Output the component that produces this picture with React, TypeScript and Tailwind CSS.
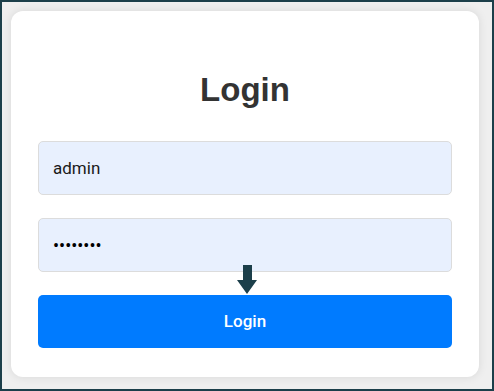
import React from 'react';

const App = () => {
  return (
    <div className="h-[391px] w-[494px] border-2 border-[#1c3f4a] bg-[#efefef] pl-[9px] pt-[9px]">
      <div className="relative flex h-[366px] w-[468px] flex-col rounded-[12px] bg-white px-[27px] pb-[29px] pt-[59px] shadow-[0_0_10px_rgba(0,0,0,0.1)]">
        <h2 className="text-center font-['Liberation_Sans',Arial,sans-serif] text-[33px] font-bold leading-[40px] text-[#333333]">
          Login
        </h2>
        <input
          type="text"
          defaultValue="admin"
          className="mt-[31px] h-[54px] w-full rounded-[5px] border border-[#dcdcdc] bg-[#e8f0fe] pl-[14px] font-['Roboto',sans-serif] text-[17px] text-[#1a1a1a] outline-none"
        />
        <input
          type="password"
          defaultValue="password"
          className="mt-[23px] h-[54px] w-full rounded-[5px] border border-[#dcdcdc] bg-[#e8f0fe] pl-[14px] font-['Roboto',sans-serif] text-[18px] text-black outline-none"
        />
        <button className="mt-[23px] h-[53px] w-full rounded-[5px] bg-[#007bff] font-['Roboto',sans-serif] text-[17px] font-medium text-white">
          Login
        </button>

        {/* pointer arrow over the gap */}
        <svg
          className="absolute left-[226px] top-[254px]"
          width="20"
          height="30"
          viewBox="0 0 20 30"
        >
          <path d="M6 0H15V15H20L10 29L0 15H6Z" fill="#1c3f4a" />
        </svg>
      </div>
    </div>
  );
};

export default App;
